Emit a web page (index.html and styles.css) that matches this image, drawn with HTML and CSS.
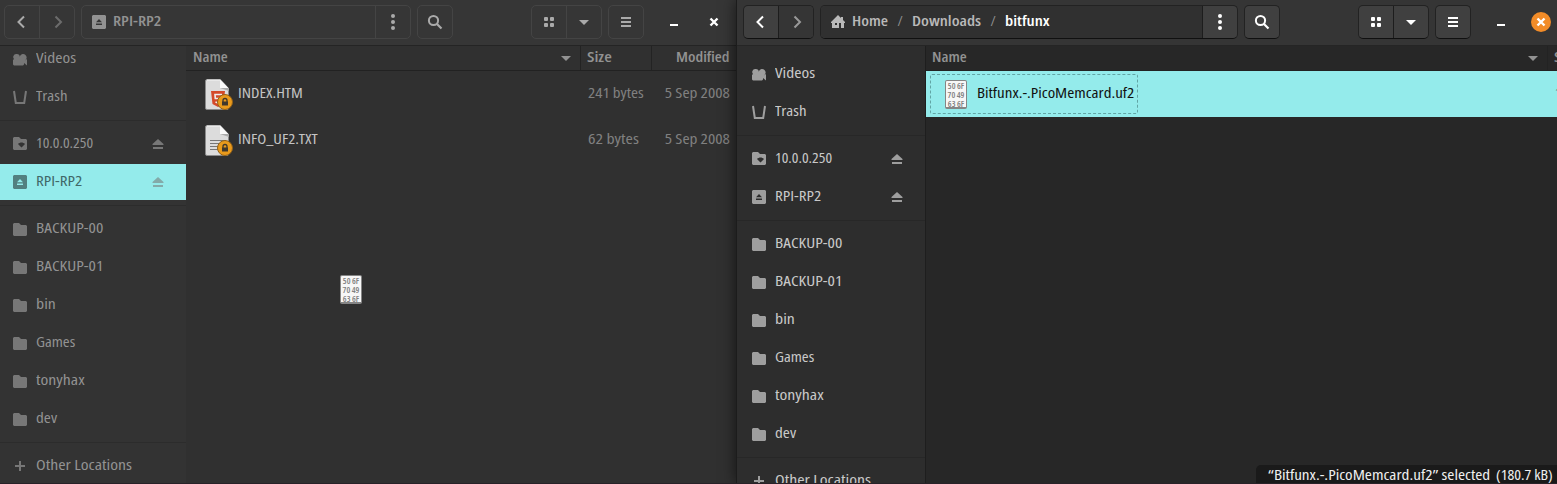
FILE: index.html
```
<!DOCTYPE html>
<html lang="en">
<head>
<meta charset="utf-8">
<title>Files</title>
<link rel="stylesheet" href="styles.css">
</head>
<body>
<svg class="defs" width="0" height="0">
  <symbol id="back" viewBox="0 0 16 16"><path d="M10 2.500 4.500 8l5.500 5.500" fill="none" stroke="currentColor" stroke-width="2"/></symbol>
  <symbol id="fwd" viewBox="0 0 16 16"><path d="M6.500 2.500 12 8l-5.500 5.500" fill="none" stroke="currentColor" stroke-width="2"/></symbol>
  <symbol id="dots" viewBox="0 0 16 16"><g fill="currentColor"><circle cx="8" cy="2" r="2"/><circle cx="8" cy="8" r="2"/><circle cx="8" cy="14" r="2"/></g></symbol>
  <symbol id="search" viewBox="0 0 16 16"><circle cx="6.500" cy="6.500" r="4.600" fill="none" stroke="currentColor" stroke-width="2"/><path d="m10 10 4.500 4.500" stroke="currentColor" stroke-width="2.200"/></symbol>
  <symbol id="grid" viewBox="0 0 16 16"><g fill="currentColor"><rect x="3" y="3" width="4" height="4" rx="1"/><rect x="9" y="3" width="4" height="4" rx="1"/><rect x="3" y="9" width="4" height="4" rx="1"/><rect x="9" y="9" width="4" height="4" rx="1"/></g></symbol>
  <symbol id="down" viewBox="0 0 16 16"><path d="M3 6h10l-5 5z" fill="currentColor"/></symbol>
  <symbol id="menu" viewBox="0 0 16 16"><path d="M3 4h10M3 8h10M3 12h10" stroke="currentColor" stroke-width="2"/></symbol>
  <symbol id="min" viewBox="0 0 16 16"><path d="M4 11h8" stroke="currentColor" stroke-width="2"/></symbol>
  <symbol id="close" viewBox="0 0 16 16"><path d="m4.500 4.500 7 7m0-7-7 7" stroke="currentColor" stroke-width="2.400"/></symbol>
  <symbol id="home" viewBox="0 0 16 16"><path fill="currentColor" fill-rule="evenodd" d="M8 1 1 8v1h1v5h12V9h1V8l-2-2V3h-2v1zM5 9h2v2H5zm4 0h2v5H9z"/></symbol>
  <symbol id="video" viewBox="0 0 16 16"><path transform="translate(0 1)" fill="currentColor" d="M4 2a3 3 0 0 0-2 5 2 2 0 0 0-.5.500L1 8v4.500l1 1h9l1-1V11l3 2.500V7l-2 1.500A3.500 3.500 0 1 0 8 4v1A3.500 3.500 0 0 0 4 2z"/></symbol>
  <symbol id="trash" viewBox="0 0 16 16"><path d="M2 2 3.800 14h8.400L14 2" fill="none" stroke="currentColor" stroke-width="2"/></symbol>
  <symbol id="folder" viewBox="0 0 16 16"><path fill="currentColor" d="M2 2h5l2 2h5l1 1v9l-1 1H2l-1-1V3z"/></symbol>
  <symbol id="remote" viewBox="0 0 16 16"><path fill="currentColor" fill-rule="evenodd" d="M2 1h5l2 2h5l1 1v9l-1 1H2l-1-1V2zM6 8c2-2 5-2 7 0l-3.500 3.500z"/></symbol>
  <symbol id="drive" viewBox="0 0 16 16"><path fill="currentColor" fill-rule="evenodd" d="M2 1h12l1 1v12l-1 1H2l-1-1V2zM5 8.200h6L8 5zm0 1.300V11h6V9.500z"/></symbol>
  <symbol id="eject" viewBox="0 0 16 16"><path fill="currentColor" d="M8 3 2.500 8v1h11V8zM3 11h10v2H3z"/></symbol>
  <symbol id="plus" viewBox="0 0 16 16"><path d="M8 3v10M3 8h10" stroke="currentColor" stroke-width="2"/></symbol>
  <symbol id="page" viewBox="0 0 28 32"><path d="M2 1.500h13.500l8 9V30a1.500 1.500 0 0 1-1.500 1.500H2A1.500 1.500 0 0 1 .5 30V3A1.500 1.500 0 0 1 2 1.500z" fill="#dcdcdc" stroke="#8a8a8a"/><path d="M2 2h13" stroke="#f5f5f5"/><path d="M15 1.500V10h8.500z" fill="#fafafa"/><path d="M15 10h9v3z" fill="#aaa"/></symbol>
  <symbol id="lock" viewBox="0 0 16 16"><circle cx="8" cy="8" r="7.500" fill="#e99a1c" stroke="#91611a"/><path d="M5 7.500h6v4H5z" fill="#40382c"/><path d="M6 8V6.500a2 2 0 0 1 4 0V8" fill="none" stroke="#40382c" stroke-width="1.300"/></symbol>
</svg>
<main class="desktop">
  <section class="window inactive">
    <header class="bar">
      <div class="group"><span class="btn"><svg><use href="#back"/></svg></span><span class="btn dim"><svg><use href="#fwd"/></svg></span></div>
      <div class="group path"><div class="crumbs"><svg><use href="#drive"/></svg><b class="s-rpib">RPI-RP2</b></div><span class="btn"><svg><use href="#dots"/></svg></span></div>
      <div class="group"><span class="btn"><svg><use href="#search"/></svg></span></div>
      <div class="group push"><span class="btn"><svg><use href="#grid"/></svg></span><span class="btn"><svg><use href="#down"/></svg></span></div>
      <div class="group"><span class="btn"><svg><use href="#menu"/></svg></span></div>
      <div class="controls"><svg><use href="#min"/></svg><span class="close"><svg><use href="#close"/></svg></span></div>
    </header>
    <div class="body">
      <nav class="side">
        <a class="row"><svg><use href="#video"/></svg><span class="s-vid">Videos</span></a>
        <a class="row"><svg><use href="#trash"/></svg><span class="s-trash">Trash</span></a>
        <hr>
        <a class="row"><svg><use href="#remote"/></svg><span class="s-ip">10.0.0.250</span><svg class="ej"><use href="#eject"/></svg></a>
        <a class="row selected"><svg><use href="#drive"/></svg><span class="s-rpi">RPI-RP2</span><svg class="ej"><use href="#eject"/></svg></a>
        <hr>
        <a class="row"><svg><use href="#folder"/></svg><span class="s-back">BACKUP-00</span></a>
        <a class="row"><svg><use href="#folder"/></svg><span class="s-back">BACKUP-01</span></a>
        <a class="row"><svg><use href="#folder"/></svg><span class="s-bin">bin</span></a>
        <a class="row"><svg><use href="#folder"/></svg><span class="s-games">Games</span></a>
        <a class="row"><svg><use href="#folder"/></svg><span class="s-tony">tonyhax</span></a>
        <a class="row"><svg><use href="#folder"/></svg><span class="s-dev">dev</span></a>
        <hr>
        <a class="row"><svg><use href="#plus"/></svg><span class="s-other">Other Locations</span></a>
      </nav>
      <div class="files">
        <div class="cols"><div class="name"><b class="s-name">Name</b><svg><use href="#down"/></svg></div><div class="size"><b class="s-size">Size</b></div><div class="mod"><b class="s-mod">Modified</b></div></div>
        <div class="file"><div class="name"><span class="doc"><svg class="page"><use href="#page"/></svg><svg class="html5" viewBox="0 0 14 16"><path d="M0 0h14l-1.500 13L7 16l-5.500-3z" fill="#d44a2a"/><path d="M11 3.500H4l.3 4h6l-.5 3.500L7 12l-2.500-1" fill="none" stroke="#eee" stroke-width="1.600"/></svg><svg class="lock"><use href="#lock"/></svg></span><span class="s-index">INDEX.HTM</span></div><div class="size"><span class="s-241">241 bytes</span></div><div class="mod"><span class="s-date">5 Sep 2008</span></div></div>
        <div class="file"><div class="name"><span class="doc"><svg class="page"><use href="#page"/></svg><svg class="lines" viewBox="0 0 16 12"><path d="M0 1.500h16M0 4.500h16M0 7.500h16M0 10.500h16" stroke="#777"/></svg><svg class="lock"><use href="#lock"/></svg></span><span class="s-info">INFO_UF2.TXT</span></div><div class="size"><span class="s-62">62 bytes</span></div><div class="mod"><span class="s-date">5 Sep 2008</span></div></div>
      </div>
    </div>
    <div class="hex dragged"><span>50 6F</span><span>70 49</span><span>63 6F</span></div>
  </section>
  <section class="window active">
    <header class="bar">
      <div class="group"><span class="btn"><svg><use href="#back"/></svg></span><span class="btn dim"><svg><use href="#fwd"/></svg></span></div>
      <div class="group path"><div class="crumbs"><svg><use href="#home"/></svg><b class="s-home">Home</b><i>/</i><b class="s-down">Downloads</b><i>/</i><b class="s-bit here">bitfunx</b></div><span class="btn"><svg><use href="#dots"/></svg></span></div>
      <div class="group"><span class="btn"><svg><use href="#search"/></svg></span></div>
      <div class="group push"><span class="btn"><svg><use href="#grid"/></svg></span><span class="btn"><svg><use href="#down"/></svg></span></div>
      <div class="group"><span class="btn"><svg><use href="#menu"/></svg></span></div>
      <div class="controls"><svg><use href="#min"/></svg><span class="close"><svg><use href="#close"/></svg></span></div>
    </header>
    <div class="body">
      <nav class="side">
        <a class="row"><svg><use href="#video"/></svg><span class="s-vid">Videos</span></a>
        <a class="row"><svg><use href="#trash"/></svg><span class="s-trash">Trash</span></a>
        <hr>
        <a class="row"><svg><use href="#remote"/></svg><span class="s-ip">10.0.0.250</span><svg class="ej"><use href="#eject"/></svg></a>
        <a class="row"><svg><use href="#drive"/></svg><span class="s-rpi">RPI-RP2</span><svg class="ej"><use href="#eject"/></svg></a>
        <hr>
        <a class="row"><svg><use href="#folder"/></svg><span class="s-back">BACKUP-00</span></a>
        <a class="row"><svg><use href="#folder"/></svg><span class="s-back">BACKUP-01</span></a>
        <a class="row"><svg><use href="#folder"/></svg><span class="s-bin">bin</span></a>
        <a class="row"><svg><use href="#folder"/></svg><span class="s-games">Games</span></a>
        <a class="row"><svg><use href="#folder"/></svg><span class="s-tony">tonyhax</span></a>
        <a class="row"><svg><use href="#folder"/></svg><span class="s-dev">dev</span></a>
        <hr>
        <a class="row"><svg><use href="#plus"/></svg><span class="s-other">Other Locations</span></a>
      </nav>
      <div class="files">
        <div class="cols"><div class="name"><b class="s-name">Name</b><svg><use href="#down"/></svg></div><div class="size"><b class="s-size">Size</b></div></div>
        <div class="file chosen"><div class="focus"><div class="hex"><span>50 6F</span><span>70 49</span><span>63 6F</span></div><span class="s-uf2">Bitfunx.-.PicoMemcard.uf2</span></div><div class="size"><span>180.7 kB</span></div></div>
      </div>
    </div>
    <footer class="status"><span class="s-sel">“Bitfunx.-.PicoMemcard.uf2” selected</span><span class="s-kb">(180.7 kB)</span></footer>
  </section>
</main>
</body>
</html>
```
FILE: styles.css
```
* { box-sizing: border-box; }
body { margin: 0; background: #282228; overflow: hidden; font: 14px/20px "Open Sans", "Noto Sans", sans-serif; font-stretch: 75%; }
.defs { position: absolute; }
svg { width: 16px; height: 16px; flex: none; display: block; }
span, b, i { white-space: nowrap; font-style: normal; }
b { font-weight: 600; }

/* Labels: the condensed face widened to the interface's letter width */
[class^="s-"] { display: inline-block; transform: scaleX(var(--k)); transform-origin: left; }
.s-vid { --k: 1.25; }
.s-trash { --k: 1.2; }
.s-ip { --k: 1.12; }
.s-rpi { --k: 1.22; }
.s-back { --k: 1.24; }
.s-bin { --k: 1.27; }
.s-games { --k: 1.18; }
.s-tony { --k: 1.27; }
.s-dev { --k: 1.22; }
.s-other { --k: 1.27; }
.s-index { --k: 1.18; }
.s-info { --k: 1.18; }
.s-241 { --k: 1.21; }
.s-62 { --k: 1.27; }
.s-uf2 { --k: 1.215; }
.s-name { --k: 1.14; }
.s-size { --k: 1.25; }
.s-rpib { --k: 1.2; }
.s-home { --k: 1.19; width: 36px; transform-origin: 0 0; }
.s-down { --k: 1.21; width: 69px; }
.s-bit { --k: 1.22; }
.s-sel { --k: 1.225; }
.mod .s-date { --k: 1.23; transform-origin: right; }
.mod .s-mod { --k: 1.15; transform-origin: right; }
.status .s-kb { --k: 1.14; transform-origin: right; }

.desktop { display: flex; width: 1557px; height: 484px; }
.window { display: flex; flex-direction: column; position: relative; height: 483px; overflow: hidden; }
.inactive { width: 736px; background: #303030; color: #929292; }
.active { width: 821px; background: #272727; color: #d0d0d0; border-left: 1px solid #1c1c1c; box-shadow: 0 0 14px #0009; overflow: visible; clip-path: inset(0 0 0 -20px); }

.bar { display: flex; gap: 6px; height: 46px; flex: none; padding: 5px 12px 0 4px; background: #363636; border-bottom: 1px solid #242424; }
.active .bar { padding: 5px 6px 0 6px; background: #353535; border-bottom-color: #252525; }
.group { display: flex; height: 34px; border: 1px solid #444; border-radius: 5px; }
.active .group { border-color: #222; border-bottom-color: #101010; background: #404040; overflow: hidden; }
.btn { display: grid; place-items: center; width: 34px; color: #aaa; }
.btn + .btn, .crumbs + .btn { width: 35px; border-left: 1px solid #444; }
.active .btn { color: #fff; }
.active .btn + .btn, .active .crumbs + .btn { border-left-color: #1d1d1d; }
.btn.dim { color: #6c6c6c; }
.active .btn.dim { color: #999; background: #353535; }
.path { width: 330px; }
.active .path { width: 418px; }
.crumbs { display: flex; align-items: center; flex: 1; padding: 0 0 2px 9px; color: #929292; }
.crumbs svg { margin: 2px 6px 0 0; }
.active .crumbs { background: #303030; color: #b9b9b9; }
.crumbs i { width: 24px; text-align: center; color: #929292; }
.crumbs .here { color: #fff; }
.push { margin-left: auto; }
.controls { display: flex; align-items: center; height: 34px; margin-left: 16px; color: #fff; gap: 22px; }
.close { display: grid; place-items: center; width: 20px; height: 20px; border-radius: 50%; }
.active .close { background: #f28c28; }

.body { display: flex; flex: 1; min-height: 0; }
.side { width: 186px; flex: none; background: #333; overflow: hidden; display: flex; flex-direction: column; justify-content: flex-end; }
.inactive .side { margin-bottom: -1px; }
.active .side { width: 189px; background: #2d2d2d; border-right: 1px solid #1e1e1e; justify-content: flex-start; padding-top: 10px; }
.row { display: flex; align-items: center; height: 36px; flex: none; padding: 0 20px 0 12px; color: #929292; }
.row + .row { margin-top: 2px; }
.active .row { color: #c9c9c9; padding: 0 20px 0 14px; }
.row svg { margin: 0 8px 0 0; color: #777; }
.active .row svg { color: #9e9e9e; }
.row span { margin-top: -2px; }
.row .ej { margin: 0 0 0 auto; }
.side hr { width: 100%; height: 1px; flex: none; margin: 5px 0; border: 0; background: #2c2c2c; }
.active .side hr { background: #272727; }
.row.selected { background: #94ebeb; color: #406868; }
.row.selected svg { color: #528080; }
.row.selected .ej { color: #83aaa9; }

.files { flex: 1; min-width: 0; overflow: hidden; }
.cols { display: flex; height: 25px; border-bottom: 1px solid #222; color: #929292; }
.cols > div { display: flex; justify-content: space-between; padding: 1px 6px 0 7px; }
.active .cols > .name { padding-left: 6px; }
.cols .size, .cols .mod { border-left: 1px solid #232323; padding-left: 6px; }
.cols svg { margin-top: 3px; }
.name { width: 394px; flex: none; }
.size { width: 71px; flex: none; }
.mod { flex: 1; text-align: right; }
.cols .mod { justify-content: flex-end; }
.active .cols .name { width: 621px; }
.file { display: flex; height: 46px; align-items: center; color: #808080; }
.file .name { display: flex; align-items: center; color: #c4c4c4; padding-left: 19px; }
.file .size { padding-left: 8px; }
.file .mod { padding-right: 6px; }
.file .name > span:last-child, .file .size, .file .mod { margin-top: -2px; }
.doc { position: relative; width: 28px; height: 32px; margin-right: 5px; }
.page { width: 28px; height: 32px; }
.html5 { position: absolute; left: 6px; top: 13px; width: 14px; height: 16px; }
.lines { position: absolute; left: 5px; top: 15px; width: 16px; height: 12px; }
.lock { position: absolute; left: 12px; top: 16px; }
.chosen { background: #94ebeb; color: #111; padding-left: 4px; }
.focus { display: flex; align-items: center; flex: none; width: 208px; height: 40px; padding-left: 14px; border: 1px dashed #62a5a5; border-radius: 2px; }
.focus > span { margin: -2px 0 0 10px; }
.chosen .size { margin-left: 409px; width: 80px; color: #558080; }
.hex { display: flex; flex-direction: column; flex: none; width: 22px; height: 29px; background: #f7f7f7; border: 1px solid #858585; border-bottom-width: 2px; border-radius: 2px; font: 600 8.500px/9px "Open Sans", sans-serif; font-stretch: 75%; text-align: center; color: #808080; }
.dragged { position: absolute; left: 340px; top: 275px; }
.status { position: absolute; right: 0; bottom: 0; display: flex; justify-content: space-between; width: 301px; height: 18px; padding: 0 4px 0 12px; background: #1a1a1a; border-radius: 5px 0 0 0; color: #efefef; }
```
